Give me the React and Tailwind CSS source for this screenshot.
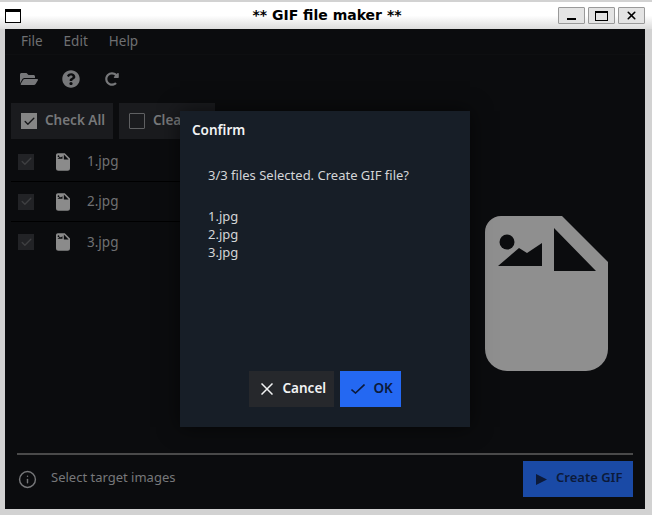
import { FaFolderOpen, FaQuestionCircle, FaRedoAlt } from 'react-icons/fa';
import { X, Check, Info } from 'lucide-react';

const files = ['1.jpg', '2.jpg', '3.jpg'];

const FileImage = ({ className }) => (
    <svg viewBox="0 0 123 155" className={className}>
        <path
            fillRule="evenodd"
            fill="currentColor"
            d="M16 0H77L123 46V133A22 22 0 0 1 101 155H22A22 22 0 0 1 0 133V16A16 16 0 0 1 16 0ZM69 12V55H111ZM57 27L42 37L34 32L13 50H57Z"
        />
        <circle cx="22" cy="26" r="7.5" fill="#0b0c0e" />
    </svg>
);

const WinButton = ({ children }) => (
    <div className="w-[27px] h-[17px] bg-[#e4e4e4] border border-[#9a9a9a] rounded-[1px] flex items-center justify-center">
        {children}
    </div>
);

const App = () => {
    return (
        <div
            className="relative w-[652px] h-[515px] overflow-hidden bg-[#d2d2d2] flex flex-col pt-[2px]"
            style={{ fontFamily: '"Noto Sans", sans-serif' }}
        >
            {/* Заголовок окна */}
            <div className="h-[27px] bg-gradient-to-b from-white via-white to-[#dcdcdc] flex items-center justify-between pl-[5px] pr-[7px]">
                <div className="w-[16px] h-[14px] border border-black border-t-[3px] bg-white" />
                <div className="text-[14px] font-bold text-black ml-[75px]" style={{ fontFamily: '"DejaVu Sans", sans-serif' }}>
                    ** GIF file maker **
                </div>
                <div className="flex gap-[3px]">
                    <WinButton>
                        <div className="w-[9px] h-[2px] bg-black mt-[7px]" />
                    </WinButton>
                    <WinButton>
                        <div className="w-[13px] h-[10px] border border-black border-t-2" />
                    </WinButton>
                    <WinButton>
                        <X size={13} strokeWidth={3} className="text-black" />
                    </WinButton>
                </div>
            </div>

            {/* Содержимое */}
            <div className="ml-[5px] mr-[7px] mb-[6px] flex-1 bg-[#0b0c0e] flex flex-col min-h-0">
                <div className="h-[26px] flex items-center gap-[21px] pl-[16px] pb-[1px] text-[13.5px] text-[#6f7072] border-b border-[#0e0f11]">
                    <span>File</span>
                    <span>Edit</span>
                    <span>Help</span>
                </div>

                <div className="h-[48px] flex items-center gap-[24px] pl-[15px] text-[#77787a]">
                    <FaFolderOpen size={18} />
                    <FaQuestionCircle size={18} />
                    <FaRedoAlt size={14} className="ml-[1px]" />
                </div>

                <div className="flex gap-[6px] pl-[6px]">
                    <div className="w-[102px] h-[36px] bg-[#1a1b1e] flex items-center pl-[10px] gap-[8px]">
                        <div className="w-[16px] h-[16px] bg-[#858585] flex items-center justify-center">
                            <Check size={13} strokeWidth={2.5} className="text-[#17181a]" />
                        </div>
                        <span className="text-[13.5px] font-semibold text-[#77787a] -mt-[2px]">Check All</span>
                    </div>
                    <div className="w-[96px] h-[36px] bg-[#1a1b1e] flex items-center pl-[10px] gap-[8px]">
                        <div className="w-[16px] h-[16px] border border-[#5f6062] rounded-[1px]" />
                        <span className="text-[13.5px] font-semibold text-[#77787a] -mt-[2px]">Clear</span>
                    </div>
                </div>

                <div className="flex-1 flex min-h-0 pt-[3px]">
                    <div className="w-[175px] ml-[6px] flex flex-col">
                        {files.map((name, i) => (
                            <div
                                key={name}
                                className={`h-[40px] flex items-center pl-[7px] ${i < 2 ? 'border-b border-[#000000]' : ''}`}
                            >
                                <div className="w-[16px] h-[16px] bg-[#222326] flex items-center justify-center">
                                    <Check size={13} strokeWidth={2.5} className="text-[#3e3f41]" />
                                </div>
                                <FileImage className="w-[14px] h-[18px] ml-[22px] text-[#8b8b8b]" />
                                <span className="ml-[17px] text-[13.5px] text-[#707173]">{name}</span>
                            </div>
                        ))}
                    </div>
                    <div className="flex-1 flex justify-end pt-[74px] pr-[37px]">
                        <FileImage className="w-[123px] h-[155px] text-[#8f8f8f]" />
                    </div>
                </div>

                <div className="mx-[12px] h-[2px] bg-[#4a4a4a]" />
                <div className="h-[54px] flex items-center justify-between pl-[13px] pr-[12px] pb-[6px]">
                    <div className="flex items-center gap-[14px] text-[#77787a]">
                        <Info size={19} strokeWidth={1.8} />
                        <span className="text-[13px] -mt-[2px]">Select target images</span>
                    </div>
                    <div className="w-[110px] h-[36px] bg-[#1a4aa6] flex items-center pl-[13px] gap-[9px] text-[#0c1a3a]">
                        <svg viewBox="0 0 10 10" className="w-[11px] h-[11px]">
                            <path d="M0 0L10 5L0 10Z" fill="currentColor" />
                        </svg>
                        <span className="text-[13px] font-semibold -mt-[2px]">Create GIF</span>
                    </div>
                </div>
            </div>

            {/* Диалог подтверждения */}
            <div className="absolute left-[180px] top-[111px] w-[290px] h-[316px] bg-[#171e27] shadow-[0_0_20px_rgba(0,0,0,0.6)] flex flex-col text-[#e6e7e9]">
                <div className="pl-[12px] pt-[9px] text-[13.5px] font-semibold leading-[20px] text-[#f2f3f4]">Confirm</div>
                <div className="pl-[28px] pt-[26px] text-[13px] leading-[18px] text-[#d4d5d7]">
                    <p>3/3 files Selected. Create GIF file?</p>
                    <p className="mt-[23px]">1.jpg</p>
                    <p>2.jpg</p>
                    <p>3.jpg</p>
                </div>
                <div className="mt-auto mb-[20px] flex justify-center gap-[6px] pr-[1px]">
                    <div className="w-[85px] h-[36px] bg-[#26282c] flex items-center pl-[12px] gap-[10px] text-[#f2f3f4]">
                        <svg viewBox="0 0 12 12" className="w-[12px] h-[12px]">
                            <path d="M0.5 0.5L11.5 11.5M11.5 0.5L0.5 11.5" stroke="currentColor" strokeWidth="1.5" fill="none" />
                        </svg>
                        <span className="text-[13.5px] font-semibold -mt-[1px]">Cancel</span>
                    </div>
                    <div className="w-[61px] h-[36px] bg-[#2468f2] flex items-center pl-[11px] gap-[9px] text-[#0c1a3a]">
                        <svg viewBox="0 0 14 10" className="w-[14px] h-[10px]">
                            <path d="M0.5 5.5L4.5 9L13.5 0.5" stroke="currentColor" strokeWidth="1.6" fill="none" />
                        </svg>
                        <span className="text-[13.5px] font-semibold -mt-[1px]">OK</span>
                    </div>
                </div>
            </div>
        </div>
    );
};

export default App;
